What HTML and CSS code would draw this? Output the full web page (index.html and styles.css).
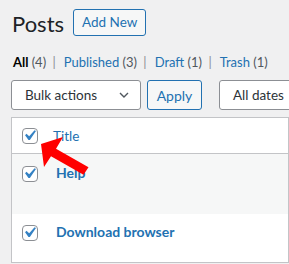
FILE: index.html
```html
<!DOCTYPE html>
<html lang="en">
<head>
  <meta charset="UTF-8">
  <title>Posts</title>
  <link rel="stylesheet" href="styles.css">
</head>
<body>

  <div class="wrap">
    <div class="page-head">
      <h1>Posts</h1>
      <a class="btn add-new" href="#">Add New</a>
    </div>

    <ul class="subsubsub">
      <li><a class="current" href="#">All <span class="count">(4)</span></a> |</li>
      <li><a href="#">Published <span class="count">(3)</span></a> |</li>
      <li><a href="#">Draft <span class="count">(1)</span></a> |</li>
      <li><a href="#">Trash <span class="count">(1)</span></a></li>
    </ul>

    <div class="tablenav">
      <div class="select bulk">
        <span>Bulk actions</span>
        <svg class="chevron" width="10" height="7" viewBox="0 0 10 7"><polyline points="1,1 5,5 9,1" fill="none" stroke="#50575e" stroke-width="1.4"/></svg>
      </div>
      <button class="btn apply">Apply</button>
      <div class="select dates"><span>All dates</span></div>
    </div>

    <table class="posts">
      <thead>
        <tr>
          <th class="cb"><span class="checkbox"><svg viewBox="0 0 20 20"><path d="M14.83 4.89l1.34.94-5.81 8.38H9.02L5.78 9.67l1.34-1.25 2.57 2.4z"/></svg></span></th>
          <th class="title-col"><a href="#">Title</a></th>
        </tr>
      </thead>
      <tbody>
        <tr class="alt first">
          <td class="cb"><span class="checkbox"><svg viewBox="0 0 20 20"><path d="M14.83 4.89l1.34.94-5.81 8.38H9.02L5.78 9.67l1.34-1.25 2.57 2.4z"/></svg></span></td>
          <td class="row-title"><a href="#">Help</a></td>
        </tr>
        <tr class="second">
          <td class="cb"><span class="checkbox"><svg viewBox="0 0 20 20"><path d="M14.83 4.89l1.34.94-5.81 8.38H9.02L5.78 9.67l1.34-1.25 2.57 2.4z"/></svg></span></td>
          <td class="row-title"><a href="#">Download browser</a></td>
        </tr>
      </tbody>
    </table>

    <!-- annotation arrow pointing at the select-all box -->
    <svg class="arrow" width="289" height="264" viewBox="0 0 289 264">
      <polygon points="41,144 63,137 56,148.8 88.5,167.3 83.5,174.7 51,156.2 44,167" fill="#ff0000"/>
    </svg>
  </div>

</body>
</html>
```

FILE: styles.css
```css
html, body { margin: 0; padding: 0; }
body { background: #f0f0f1; font-family: Lato, Arial, sans-serif; color: #1d2327; overflow: hidden; width: 289px; height: 264px; }
a { color: #2271b1; text-decoration: none; }

.wrap { position: relative; padding-left: 11px; height: 264px; }

.page-head { display: flex; align-items: center; padding-top: 9px; height: 27px; }
.page-head h1 { margin: 2px 9px 0 1px; font-size: 22px; font-weight: 400; line-height: 27px; }
.btn { box-sizing: border-box; border: 1px solid #2271b1; border-radius: 3px; background: #f6f7f7; color: #2271b1; font-family: inherit; font-size: 14px; }
.add-new { display: block; height: 27px; line-height: 25px; padding: 0 8px; font-size: 13.5px; }

.subsubsub { list-style: none; margin: 0; padding: 0; display: flex; gap: 5px; margin-top: 17px; height: 18px; line-height: 18px; font-size: 13px; color: #8c8f94; }
.subsubsub li { white-space: nowrap; }
.subsubsub a { padding: 0 3px; }
.subsubsub a.current { color: #000; font-weight: 700; padding-left: 2px; }
.subsubsub .count { color: #50575e; font-weight: 400; }

.tablenav { display: flex; align-items: center; margin-top: 9px; height: 30px; overflow: hidden; }
.tablenav > * { flex-shrink: 0; }
.select { box-sizing: border-box; height: 30px; border: 1px solid #8c8f94; border-radius: 3px; background: #fff; display: flex; align-items: center; font-size: 13.5px; color: #2c3338; padding-left: 13px; white-space: nowrap; }
.bulk { width: 130px; justify-content: space-between; padding-right: 11px; }
.apply { height: 30px; width: 55px; margin-left: 6px; padding: 0; }
.dates { margin-left: 17px; width: 120px; }

.posts { margin-top: 7px; width: 278px; border-collapse: collapse; border: 1px solid #c3c4c7; background: #fff; font-size: 14px; }
.posts th { text-align: left; font-weight: 400; height: 35px; border-bottom: 1px solid #c3c4c7; padding: 0; font-size: 13.5px; }
.posts td { padding: 0; vertical-align: top; }
.posts .cb { width: 31px; padding-left: 10px; }
.posts th.cb .checkbox { margin-top: 1px; }
.posts tr.first td { height: 60px; }
.posts tr.first td.cb { padding-top: 12px; height: 48px; }
.posts tr.first td.row-title { padding-top: 10px; height: 50px; }
.posts tr.second td { height: 48px; }
.posts tr.second td.cb { padding-top: 11px; height: 37px; }
.posts tr.second td.row-title { padding-top: 9px; height: 39px; }
.row-title a { font-weight: 700; margin-left: 3px; }
.alt { background: #f6f7f7; }

.checkbox { box-sizing: border-box; display: block; width: 16px; height: 16px; border: 1px solid #8c8f94; border-radius: 4px; background: #fff; position: relative; }
.checkbox svg { position: absolute; left: -4px; top: -4px; width: 21px; height: 21px; fill: #3582c4; }

.arrow { position: absolute; left: 0; top: 0; pointer-events: none; }
```
